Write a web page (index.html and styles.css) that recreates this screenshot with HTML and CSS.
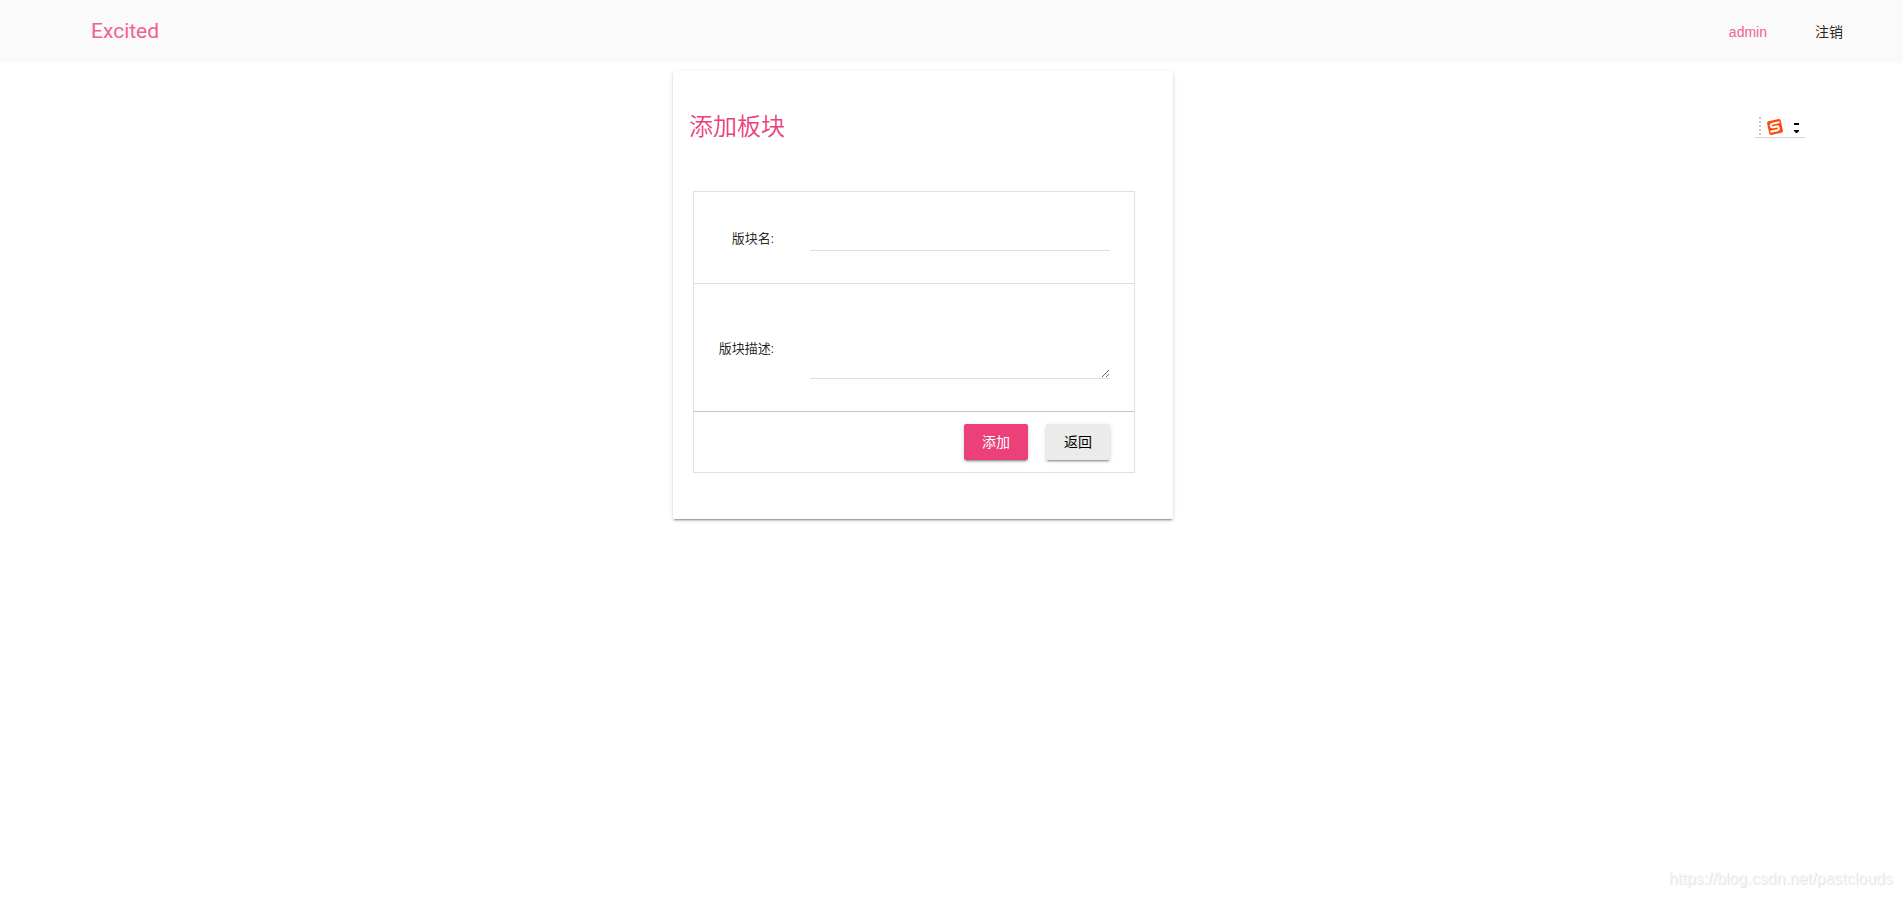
FILE: index.html
```
<!DOCTYPE html>
<html lang="zh-CN">
<head>
    <meta charset="UTF-8">
    <meta name="viewport" content="width=device-width, initial-scale=1.0">
    <title>添加板块</title>
    <link rel="stylesheet" href="styles.css">
</head>
<body>
    <header class="header">
        <a class="logo" href="#">Excited</a>
        <nav class="nav">
            <a class="user" href="#">admin</a>
            <a href="#">注销</a>
        </nav>
    </header>

    <main class="main">
        <div class="card">
            <h1 class="card-title">添加板块</h1>
            <form action="#" method="post">
                <table class="form-table">
                    <tr>
                        <td class="label-cell"><label for="name">版块名:</label></td>
                        <td class="input-cell"><input class="field" type="text" id="name" name="name"></td>
                    </tr>
                    <tr>
                        <td class="label-cell"><label for="description">版块描述:</label></td>
                        <td class="input-cell"><textarea class="field area" id="description" name="description"></textarea></td>
                    </tr>
                    <tr class="action-row">
                        <td colspan="2">
                            <div class="actions">
                                <button class="btn btn-primary" type="submit">添加</button>
                                <button class="btn" type="button">返回</button>
                            </div>
                        </td>
                    </tr>
                </table>
            </form>
        </div>
    </main>

    <!-- input method bar -->
    <div class="ime">
        <svg width="50" height="21" viewBox="0 0 50 21">
            <path d="M5 0V20" stroke="#c4c4c4" stroke-width="2" stroke-dasharray="2 2"/>
            <path d="M0 20.5H50" stroke="#d8d8d8"/>
            <g transform="rotate(-12 20 10)">
                <rect x="13" y="3" width="14" height="14" rx="2" fill="#ff4a0c"/>
                <path d="M25.5 6.2H18.2C15.4 6.2 15.4 9.8 18.2 9.8H21.8C24 9.8 24 13.6 21.8 13.6H14.5" fill="none" stroke="#fff" stroke-width="2"/>
            </g>
            <path d="M39 6H44V8H39ZM39 13H44V14L42 16H41L39 14Z" fill="#000"/>
        </svg>
    </div>

    <div class="watermark">https://blog.csdn.net/pastclouds</div>
</body>
</html>
```

FILE: styles.css
```
* {
    box-sizing: border-box;
}
body {
    margin: 0;
    background-color: #fff;
    color: rgba(0, 0, 0, 0.87);
    font-family: Roboto, "Noto Sans CJK SC", sans-serif;
    font-size: 14px;
}
a {
    color: inherit;
    text-decoration: none;
}
.header {
    display: flex;
    justify-content: space-between;
    align-items: center;
    height: 63px;
    padding: 0 60px 2px 91px;
    background-color: #fafafa;
}
.logo {
    color: #f06292;
    font-size: 21px;
}
.nav {
    display: flex;
    align-items: baseline;
    gap: 48px;
}
.nav .user {
    color: #f06292;
    font-family: "Liberation Sans", Arial, sans-serif;
}
.main {
    display: flex;
    justify-content: center;
    padding: 8px 57px 40px 0;
}
.card {
    width: 500px;
    padding: 40px 16px 46px;
    border-radius: 2px;
    background-color: #fff;
    box-shadow: 0 2px 2px 0 rgba(0, 0, 0, 0.14), 0 3px 1px -2px rgba(0, 0, 0, 0.2), 0 1px 5px 0 rgba(0, 0, 0, 0.12);
}
.card-title {
    margin: 0 0 48px;
    color: #ec407a;
    font-size: 24px;
    font-weight: 350;
    line-height: 32px;
}
.form-table {
    width: 442px;
    margin-left: 4px;
    border: 1px solid #e0e0e0;
    border-spacing: 0;
    font-size: 13px;
}
.form-table td {
    padding: 12px 24px 12px 12px;
}
.form-table tr + tr td {
    border-top: 1px solid #e0e0e0;
}
.form-table .action-row td {
    border-top-color: #c4c4c4;
}
.form-table .label-cell {
    padding-left: 24px;
    text-align: right;
    white-space: nowrap;
}
.form-table .input-cell {
    width: 336px;
    padding-top: 32px;
    padding-bottom: 32px;
}
.field {
    display: block;
    width: 100%;
    height: 27px;
    margin: 0;
    padding: 4px 0;
    border: none;
    border-bottom: 1px solid #e0e0e0;
    background: none;
    color: inherit;
    font-family: inherit;
    font-size: 16px;
    outline: none;
}
.area {
    height: 63px;
}
.field:focus {
    border-bottom-color: #ec407a;
}
.actions {
    display: flex;
    justify-content: flex-end;
    gap: 18px;
}
.btn {
    min-width: 64px;
    height: 36px;
    padding: 0 16px 2px;
    border: none;
    border-radius: 2px;
    background-color: #ebebeb;
    box-shadow: 0 2px 2px 0 rgba(0, 0, 0, 0.14), 0 3px 1px -2px rgba(0, 0, 0, 0.2), 0 1px 5px 0 rgba(0, 0, 0, 0.12);
    color: #000;
    font-family: inherit;
    font-size: 14px;
    cursor: pointer;
}
.btn-primary {
    background-color: #ec407a;
    color: #fff;
}
.ime {
    position: absolute;
    top: 117px;
    right: 98px;
}
.ime svg {
    display: block;
}
.watermark {
    position: fixed;
    right: 10px;
    bottom: 9px;
    color: #f6f6f6;
    font-family: "Liberation Sans", Arial, sans-serif;
    font-size: 16px;
    text-shadow: 1px 1px 1px #e0e0e0;
}
```
